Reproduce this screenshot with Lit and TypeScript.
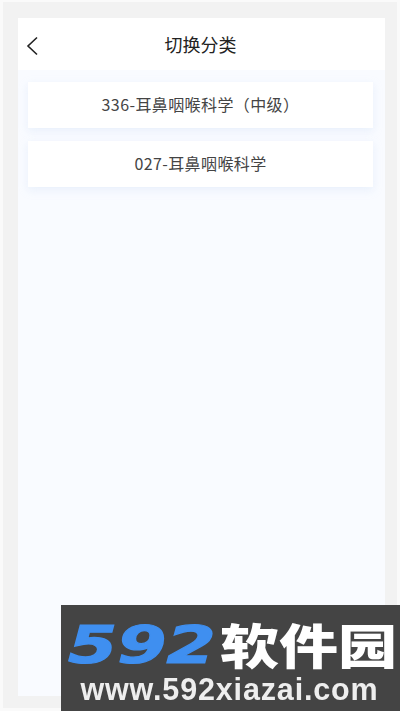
import { LitElement, html, css } from "lit";
import { customElement } from "lit/decorators.js";

@customElement("app-root")
export class AppRoot extends LitElement {
  static styles = css`
    :host { display: block; width: 400px; height: 711px; position: relative; overflow: hidden;
      background: #f2f2f2; box-sizing: border-box; padding: 18px 15px 15px 18px;
      box-shadow: inset 3px 2px 0 #fafafa, inset -3px -3px 0 #fafafa;
      font-family: "Noto Sans CJK SC", "Noto Sans", sans-serif; }
    .panel { height: 100%; display: flex; flex-direction: column; background: #f9fbff; }
    .head { height: 52px; flex: none; background: #fff; display: flex; align-items: center; justify-content: center; position: relative; }
    .back { position: absolute; left: 7px; top: 18px; width: 14px; height: 20px; }
    .title { font-size: 18px; color: #222; margin: -1px 2px 0 0; }
    .list { display: flex; flex-direction: column; gap: 13px; padding: 12px 12px 0 10px; }
    .card { height: 46px; box-sizing: border-box; padding-bottom: 2px; background: #fff; display: flex; align-items: center; justify-content: center;
      font-size: 16px; letter-spacing: .4px; color: #444; box-shadow: 0 3px 8px rgba(225,235,250,.7); }
    .mark { position: absolute; left: 61px; top: 605px; width: 339px; height: 106px; background: #444; color: #fff; overflow: hidden; }
    .logo { display: flex; align-items: center; height: 70px; padding-left: 7px; white-space: nowrap; }
    .num { font: italic 700 52px/1 "DejaVu Sans", sans-serif; color: #3f8ff0; -webkit-text-stroke: 1.2px #3f8ff0; margin-top: 10px; transform: scaleX(1.36); transform-origin: left; width: 152px; flex: none; }
    .cn { font-size: 59px; line-height: 1; font-weight: 900; margin-top: 6px; transform: scaleY(.8); filter: blur(.4px); }
    .url { font: 700 30.5px/1 "Liberation Sans", sans-serif; text-align: center; letter-spacing: .85px; color: #eee; margin: -1px 0 0 -2px; filter: blur(.5px); }
  `;
  render() {
    return html`
      <div class="panel">
        <div class="head">
          <svg class="back" viewBox="0 0 14 20" fill="none" stroke="#222" stroke-width="1.6"><path d="M12 1.5 3 10l9 8.5"/></svg>
          <div class="title">切换分类</div>
        </div>
        <div class="list">
          <div class="card">336-耳鼻咽喉科学（中级）</div>
          <div class="card">027-耳鼻咽喉科学</div>
        </div>
      </div>
      <div class="mark">
        <div class="logo"><span class="num">592</span><span class="cn">软件园</span></div>
        <div class="url">www.592xiazai.com</div>
      </div>
    `;
  }
}
